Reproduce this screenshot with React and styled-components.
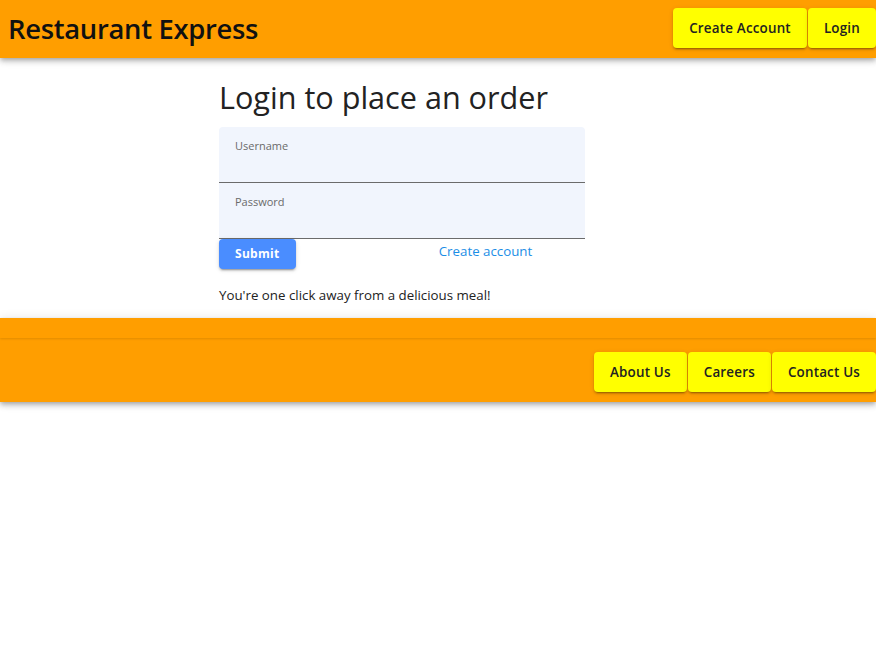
import React from 'react';
import styled, { createGlobalStyle } from 'styled-components';

const ORANGE = '#FF9E00';
const YELLOW = '#FFFF00';
const FIELD_BG = '#F1F5FD';
const LINK_BLUE = '#1C8EE6';
const SUBMIT_BLUE = '#4A8DFF';

const GlobalStyle = createGlobalStyle`
  html, body {
    margin: 0;
    padding: 0;
    background: #fff;
    font-family: "Open Sans", "Noto Sans", sans-serif;
    color: #222;
  }
`;

const Page = styled.div`
  min-height: 100vh;
  display: flex;
  flex-direction: column;
`;

const AppBar = styled.header`
  height: 58px;
  background: ${ORANGE};
  display: flex;
  align-items: center;
  justify-content: space-between;
  padding-left: 8px;
  box-shadow: 0 2px 4px -1px rgba(0,0,0,0.2), 0 4px 5px 0 rgba(0,0,0,0.14), 0 1px 10px 0 rgba(0,0,0,0.12);
  position: relative;
  z-index: 2;
`;

const Brand = styled.h1`
  margin: 0 0 1px;
  font-size: 27.4px;
  font-weight: 600;
  color: #111;
  letter-spacing: -0.3px;
`;

const NavGroup = styled.nav`
  display: flex;
  gap: 1px;
  align-self: flex-start;
  margin-top: ${p => (p.$top ? '8px' : '14px')};
`;

const NavButton = styled.button`
  height: 40px;
  padding: 0 16px;
  border: none;
  border-radius: 4px;
  background: ${YELLOW};
  color: #222;
  font-family: inherit;
  font-size: 13.4px;
  font-weight: 600;
  letter-spacing: 0.2px;
  cursor: pointer;
  box-shadow: 0 3px 1px -2px rgba(0,0,0,0.2), 0 2px 2px 0 rgba(0,0,0,0.14), 0 1px 5px 0 rgba(0,0,0,0.12);
`;

const Main = styled.main`
  width: 366px;
  margin: 0 auto;
  padding: 21px 0 14px;
  transform: translateX(-36px);
`;

const Heading = styled.h2`
  margin: 0 0 11px;
  font-size: 30.6px;
  font-weight: 400;
  color: #222;
  line-height: 1.2;
`;

const Field = styled.label`
  display: block;
  height: 56px;
  box-sizing: border-box;
  background: ${FIELD_BG};
  border-bottom: 1px solid #6b6b6b;
  border-radius: ${p => (p.$first ? '4px 4px 0 0' : '0')};
  padding: 6px 16px 0;
`;

const FieldLabel = styled.span`
  font-size: 11px;
  color: #6a6a6a;
`;

const ActionRow = styled.div`
  display: grid;
  grid-template-columns: 1fr 1fr;
  align-items: start;
`;

const SubmitButton = styled.button`
  justify-self: start;
  height: 30px;
  padding: 0 16px;
  border: none;
  border-radius: 4px;
  background: ${SUBMIT_BLUE};
  color: #fff;
  font-family: inherit;
  font-size: 12px;
  font-weight: 700;
  letter-spacing: 0.3px;
  box-shadow: 0 3px 1px -2px rgba(0,0,0,0.2), 0 2px 2px 0 rgba(0,0,0,0.14), 0 1px 5px 0 rgba(0,0,0,0.12);
`;

const CreateLink = styled.a`
  justify-self: center;
  margin-top: 3px;
  margin-right: 16px;
  font-size: 13.3px;
  color: ${LINK_BLUE};
  text-decoration: none;
`;

const Tagline = styled.p`
  margin: 17px 0 0;
  font-size: 13.3px;
  color: #222;
`;

const Footer = styled.footer`
  display: flex;
  flex-direction: column;
  box-shadow: 0 2px 4px -1px rgba(0,0,0,0.2), 0 4px 5px 0 rgba(0,0,0,0.14), 0 1px 10px 0 rgba(0,0,0,0.12);
`;

const FooterStrip = styled.div`
  height: 20px;
  background: ${ORANGE};
  box-shadow: 0 1px 2px rgba(0,0,0,0.12);
  position: relative;
  z-index: 1;
`;

const FooterBar = styled.div`
  height: 64px;
  background: ${ORANGE};
  display: flex;
  justify-content: flex-end;
`;

export default function App() {
  return (
    <Page>
      <GlobalStyle />
      <AppBar>
        <Brand>Restaurant Express</Brand>
        <NavGroup $top>
          <NavButton>Create Account</NavButton>
          <NavButton>Login</NavButton>
        </NavGroup>
      </AppBar>

      <Main>
        <Heading>Login to place an order</Heading>
        <Field $first>
          <FieldLabel>Username</FieldLabel>
        </Field>
        <Field>
          <FieldLabel>Password</FieldLabel>
        </Field>
        <ActionRow>
          <SubmitButton>Submit</SubmitButton>
          <CreateLink href="#">Create account</CreateLink>
        </ActionRow>
        <Tagline>You're one click away from a delicious meal!</Tagline>
      </Main>

      <Footer>
        <FooterStrip />
        <FooterBar>
          <NavGroup>
            <NavButton>About Us</NavButton>
            <NavButton>Careers</NavButton>
            <NavButton>Contact Us</NavButton>
          </NavGroup>
        </FooterBar>
      </Footer>
    </Page>
  );
}
